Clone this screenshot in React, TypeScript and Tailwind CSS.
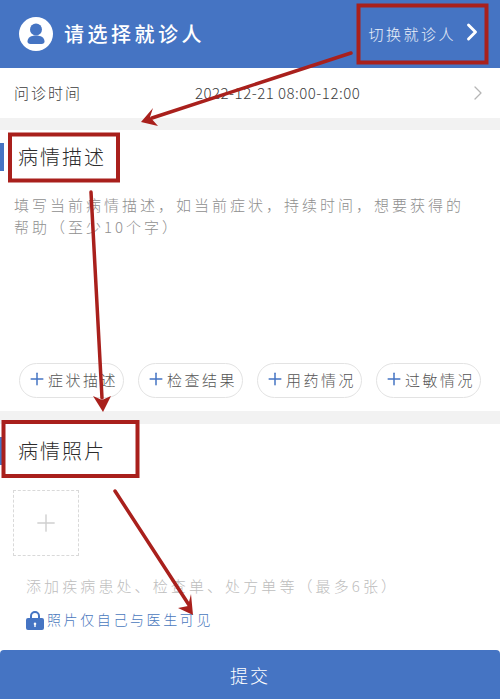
import React from "react";
import { ChevronRight, Plus } from "lucide-react";

const chips = ["症状描述", "检查结果", "用药情况", "过敏情况"];
const font = { fontFamily: '"Noto Sans CJK SC", "Noto Sans", sans-serif' };

function SectionTitle({ children }: { children: string }) {
  return (
    <div className="flex items-center h-[28px]">
      <div className="w-1 h-full bg-[#4574c3]" />
      <h2 className="ml-[14px] text-xl font-light tracking-[2px] leading-none text-[#2b2b2b]">{children}</h2>
    </div>
  );
}

export default function App() {
  return (
    <div style={font} className="relative w-[500px] h-[699px] overflow-hidden bg-white flex flex-col">
      {/* header */}
      <header className="h-[68px] shrink-0 bg-[#4574c3] flex items-center pl-[19px] pr-[14px] text-white">
        <div className="w-[34px] h-[34px] rounded-full bg-white flex items-center justify-center">
          <svg viewBox="0 0 34 34" className="w-[34px] h-[34px]" fill="#4574c3">
            <circle cx="17" cy="12.5" r="6" />
            <path d="M8.5 24.5c0-4 3.5-6 8.5-6s8.500 2 8.500 6c0 1.500-1 2.500-3 2.500h-11c-2 0-3-1-3-2.500z" />
          </svg>
        </div>
        <span className="ml-[11px] text-xl font-medium tracking-[3.500px]">请选择就诊人</span>
        <span className="ml-auto text-[15px] font-light tracking-[2.500px] text-white/90">切换就诊人</span>
        <ChevronRight className="ml-[2px] -mt-[4px] w-[28px] h-[28px]" strokeWidth={2.5} />
      </header>

      {/* time row */}
      <div className="h-[50px] shrink-0 flex items-center pl-[14px] pr-[10px] text-[#3c3c3c]">
        <span className="text-[15px] font-light tracking-[2px]">问诊时间</span>
        <span className="ml-[113px] text-[15px] font-light tracking-[0.500px]">2022-12-21 08:00-12:00</span>
        <ChevronRight className="ml-auto w-[24px] h-[24px] text-[#b5b5b5]" strokeWidth={1.3} />
      </div>
      <div className="h-3 shrink-0 bg-[#f2f2f2]" />

      {/* description */}
      <section className="h-[281px] shrink-0 flex flex-col pt-[13px]">
        <SectionTitle>病情描述</SectionTitle>
        <p className="mt-[23px] pl-[14px] pr-[30px] text-[15px] font-light leading-[22px] tracking-[3px] text-[#8f8f8f]">
          填写当前病情描述，如当前症状，持续时间，想要获得的帮助（至少10个字）
        </p>
        <div className="mt-auto mb-[13px] flex gap-[14px] pl-[19px]">
          {chips.map((chip) => (
            <div key={chip} className="w-[105px] h-[35px] rounded-full border border-[#e3e3e3] flex items-center pl-[7px]">
              <Plus className="w-[20px] h-[20px] text-[#4574c3] -mt-[3px]" strokeWidth={1.8} />
              <span className="ml-[1px] text-[15px] font-light tracking-[2.500px] text-[#555]">{chip}</span>
            </div>
          ))}
        </div>
      </section>
      <div className="h-[13px] shrink-0 bg-[#f2f2f2]" />

      {/* photos */}
      <section className="flex-1 flex flex-col pt-[13px]">
        <SectionTitle>病情照片</SectionTitle>
        <div className="mt-[25px] ml-[13px] w-[66px] h-[66px] border border-dashed border-[#d9d9d9] flex items-center justify-center">
          <Plus className="w-[28px] h-[28px] text-[#cfcfcf]" strokeWidth={1.2} />
        </div>
        <p className="mt-[18px] ml-[26px] text-[15px] font-light leading-[24px] tracking-[3.100px] text-[#bdbdbd]">
          添加疾病患处、检查单、处方单等（最多6张）
        </p>
        <div className="mt-[11px] ml-[26px] flex items-center">
          <svg viewBox="0 0 18 20" className="w-[18px] h-[20px]" fill="#4574c3">
            <path d="M4 9V6a5 5 0 0 1 10 0v3h-2V6a3 3 0 0 0-6 0v3z" />
            <path fillRule="evenodd" d="M2 8h14a2 2 0 0 1 2 2v8a2 2 0 0 1-2 2H2a2 2 0 0 1-2-2v-8a2 2 0 0 1 2-2zm7 4.500a1.300 1.300 0 0 0-.7 2.400V17h1.400v-2.100a1.300 1.300 0 0 0-.7-2.400z" />
          </svg>
          <span className="ml-[3px] text-[14px] font-light tracking-[2.600px] text-[#4a78bd]">照片仅自己与医生可见</span>
        </div>
      </section>

      {/* submit */}
      <button className="h-[49px] shrink-0 rounded-t-[4px] bg-[#4574c3] text-white text-lg font-light tracking-[2px]">提交</button>

      {/* annotations */}
      <svg className="absolute inset-0 w-[500px] h-[699px] pointer-events-none" viewBox="0 0 500 699" fill="none">
        <g stroke="#a9201c" strokeWidth="4">
          <rect x="358.500" y="5.500" width="128" height="57" />
          <rect x="10" y="134.500" width="108" height="46" />
          <rect x="3.500" y="422" width="134" height="54" />
        </g>
        <g stroke="#a9201c" strokeWidth="3.500" strokeLinecap="round">
          <path d="M351 53 152 118" />
          <path d="M91 192 102 398" />
          <path d="M115 491 189 605" />
        </g>
        <g fill="#a9201c">
          <path d="M141 122 153 108 150 117 158 126z" />
          <path d="M103 412 93 396 102 400 111 396z" />
          <path d="M193 615 178 608 188 606 191 594z" />
        </g>
      </svg>
    </div>
  );
}
